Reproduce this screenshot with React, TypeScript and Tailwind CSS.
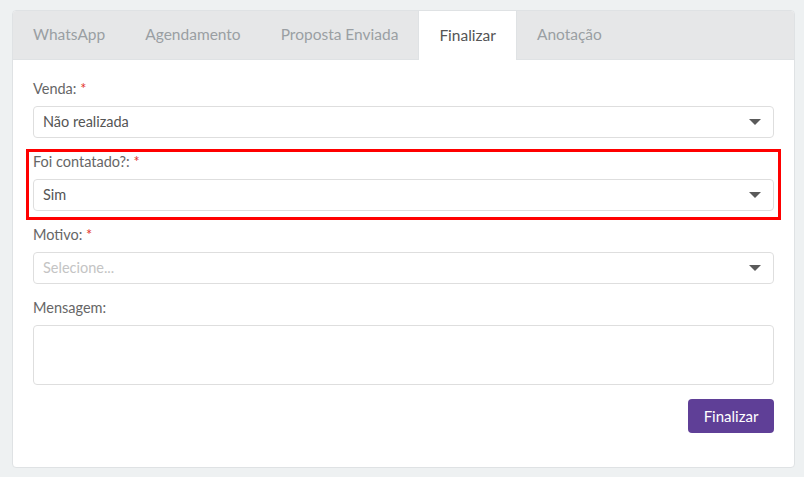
import { ReactNode } from 'react'

const tabs = ['WhatsApp', 'Agendamento', 'Proposta Enviada', 'Finalizar', 'Anotação']

function Caret() {
    return (
        <svg width="12" height="6" viewBox="0 0 12 6" className="shrink-0">
            <path d="M0 0 H12 L6 6 Z" fill="#5a5a5a" />
        </svg>
    )
}

function Field({ label, required, children }: { label: string; required?: boolean; children: ReactNode }) {
    return (
        <div>
            <div className="text-[14.5px] leading-5 text-[#666] mb-[7px]">
                {label} {required && <span className="text-[#e3342f]">*</span>}
            </div>
            {children}
        </div>
    )
}

function Select({ value, placeholder }: { value?: string; placeholder?: string }) {
    return (
        <div className="h-8 flex items-center justify-between border border-[#dedede] rounded px-[9px] pr-[12px] bg-white">
            {value ? (
                <span className="text-[14.5px] text-[#555]">{value}</span>
            ) : (
                <span className="text-[14.5px] text-[#c4c4c4]">{placeholder}</span>
            )}
            <Caret />
        </div>
    )
}

export default function App() {
    return (
        <div className="min-h-[477px] bg-[#eef1f2] pt-[10px] px-[12px] pb-[10px]" style={{ fontFamily: 'Lato, "Noto Sans", sans-serif' }}>
            <div className="w-[783px] bg-white border border-[#dfe2e4] rounded-[4px] overflow-hidden">
                {/* Tabs */}
                <div className="flex h-[49px] bg-[#e6e7e8] border-b border-[#dfe2e4]">
                    {tabs.map(t => (
                        <div
                            key={t}
                            className={`px-5 flex items-center text-[15.5px] ${t === 'Finalizar' ? 'bg-white text-[#555] border-x border-[#dfe2e4] -mb-px' : 'text-[#9a9fa3]'}`}
                        >
                            {t}
                        </div>
                    ))}
                </div>

                {/* Form */}
                <div className="px-5 pt-[19px] pb-[34px] flex flex-col gap-[14px]">
                    <Field label="Venda:" required>
                        <Select value="Não realizada" />
                    </Field>

                    <div className="relative">
                        <Field label="Foi contatado?:" required>
                            <Select value="Sim" />
                        </Field>
                        <div className="absolute -left-[7px] -right-[7px] -top-[3px] -bottom-[9px] border-[3px] border-[#ff0000] pointer-events-none" />
                    </div>

                    <Field label="Motivo:" required>
                        <Select placeholder="Selecione..." />
                    </Field>

                    <Field label="Mensagem:">
                        <textarea className="block w-full h-[60px] border border-[#dedede] rounded resize-none outline-none px-[9px] py-[6px] text-[14px]" />
                    </Field>

                    <div className="flex justify-end">
                        <button className="w-[86px] h-[34px] rounded bg-[#5f3f97] text-white text-[15px]">
                            Finalizar
                        </button>
                    </div>
                </div>
            </div>
        </div>
    )
}
